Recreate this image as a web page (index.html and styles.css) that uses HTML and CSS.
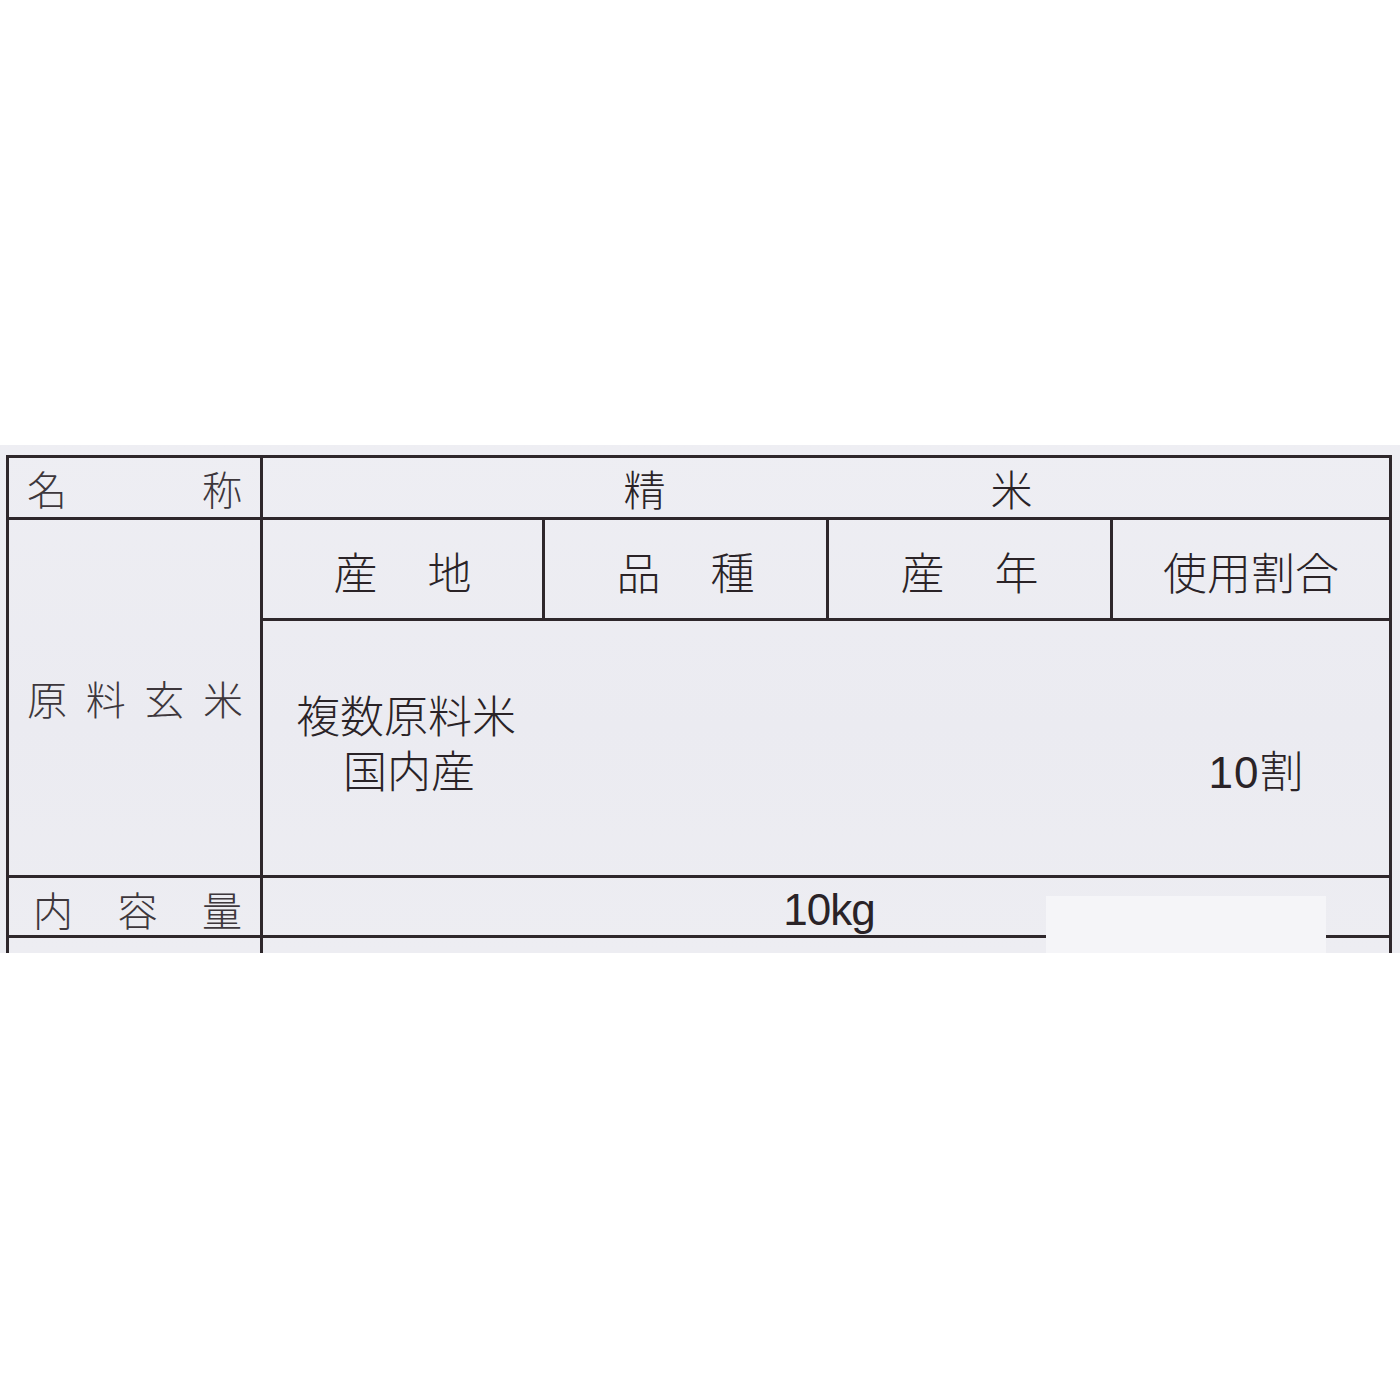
FILE: index.html
```html
<!DOCTYPE html>
<html lang="ja">
<head>
<meta charset="utf-8">
<title>精米 表示</title>
<link rel="stylesheet" href="styles.css">
</head>
<body>
<div class="page">
  <section class="label">
    <div class="table">
      <div class="cell head-left r1"><span>名</span><span>称</span></div>
      <div class="cell name-val r1"><span>精</span><span>米</span></div>

      <div class="cell head-left r23"><span>原</span><span>料</span><span>玄</span><span>米</span></div>
      <div class="cell sub pair"><span>産</span><span>地</span></div>
      <div class="cell sub pair"><span>品</span><span>種</span></div>
      <div class="cell sub pair"><span>産</span><span>年</span></div>
      <div class="cell sub"><span>使用割合</span></div>

      <div class="cell data">
        <div class="data-main">
          <div class="line">複数原料米</div>
          <div class="line indent">国内産</div>
        </div>
        <div class="data-ratio">
          <div class="line"><span class="num">10</span>割</div>
        </div>
      </div>

      <div class="cell head-left r4 wide3"><span>内</span><span>容</span><span>量</span></div>
      <div class="cell amount r4"><span class="num">10kg</span></div>

      <div class="cell r5"></div>
      <div class="cell r5 span4"></div>
    </div>
    <div class="patch"></div>
  </section>
</div>
</body>
</html>
```

FILE: styles.css
```css
html, body {
  margin: 0;
  padding: 0;
  background: #ffffff;
}

.page {
  width: 1400px;
  height: 1400px;
  padding-top: 445px;
  box-sizing: border-box;
}

.label {
  position: relative;
  height: 508px;
  background: linear-gradient(180deg, #eeeef3 0%, #ebebf1 55%, #ededf2 100%);
  padding: 10px 8px 0 6px;
  box-sizing: border-box;
  overflow: hidden;
  font-family: "Noto Sans CJK JP", "Noto Sans", sans-serif;
  font-weight: 300;
  color: #2a2327;
}

.table {
  display: grid;
  grid-template-columns: 254px 282px 284px 284px 279px;
  grid-template-rows: 62px 101px 257px 60px 40px;
  border-top: 3px solid #2e272b;
  border-left: 3px solid #2e272b;
  width: 1386px;
  box-sizing: border-box;
}

.cell {
  border-right: 3px solid #2e272b;
  border-bottom: 3px solid #2e272b;
  box-sizing: border-box;
  display: flex;
  align-items: center;
  line-height: 1;
}

.head-left {
  grid-column: 1;
  justify-content: space-between;
  font-size: 40px;
  color: #3d373c;
  padding: 0 18px 0 18px;
}

.r1 { grid-row: 1; }
.r23 { grid-row: 2 / 4; padding-right: 17px; }
.r4 { grid-row: 4; }
.wide3 { padding-left: 24px; padding-right: 18px; padding-top: 4px; }
.r5 { grid-row: 5; }
.span4 { grid-column: 2 / 6; }

.name-val {
  grid-column: 2 / 6;
  justify-content: center;
  gap: 325px;
  font-size: 42px;
  padding-left: 4px;
}

.sub {
  grid-row: 2;
  justify-content: center;
  font-size: 44px;
  padding-top: 4px;
}

.pair {
  gap: 50px;
}

.data {
  grid-row: 3;
  grid-column: 2 / 6;
  display: grid;
  grid-template-columns: 1fr 276px;
  align-items: start;
  padding-top: 66px;
  font-size: 44px;
}

.data .line {
  line-height: 55px;
  white-space: nowrap;
}

.data-main {
  padding-left: 33px;
}

.indent {
  padding-left: 47px;
}

.data-ratio {
  padding-top: 55px;
  text-align: center;
  padding-left: 10px;
}

.num {
  font-family: "Liberation Sans", Arial, sans-serif;
  font-weight: 400;
}

.data-ratio .num {
  font-size: 44px;
  letter-spacing: 1px;
}

.amount {
  grid-column: 2 / 6;
  justify-content: center;
  font-size: 44px;
  padding-top: 6px;
  padding-left: 6px;
  letter-spacing: -1px;
}

.patch {
  position: absolute;
  left: 1046px;
  top: 451px;
  width: 280px;
  height: 70px;
  background: #f5f5f8;
}
```
